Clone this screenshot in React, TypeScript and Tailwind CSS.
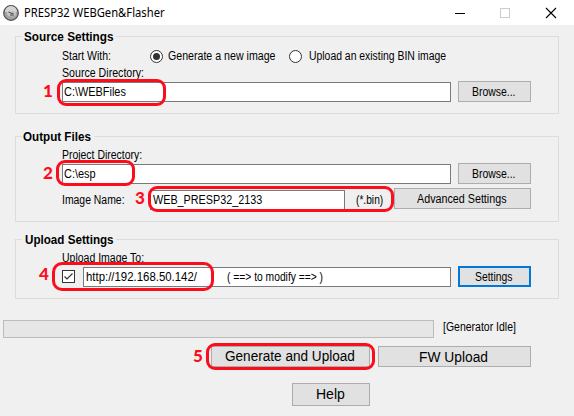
import type { ReactNode } from "react";

const Txt = ({ c = "", children }: { c?: string; children: ReactNode }) => (
  <span className={`inline-block origin-left whitespace-pre ${c}`}>{children}</span>
);

const Btn = ({ c, children }: { c: string; children: ReactNode }) => (
  <button className={`flex shrink-0 items-center bg-[#e1e1e1] ${c}`}>{children}</button>
);

const Group = ({ title, legend, scale, c, children }: { title: string; legend: string; scale: string; c: string; children: ReactNode }) => (
  <section className={`mx-[15px] flex shrink-0 flex-col border border-[#dcdcdc] ${c}`}>
    <h2 className={`-mt-[7px] ml-[6px] h-[14px] shrink-0 bg-[#f0f0f0] font-bold leading-[14px] ${legend}`}>
      <Txt c={scale}>{title}</Txt>
    </h2>
    {children}
  </section>
);

const Mark = ({ box, num, n }: { box: string; num: string; n: number }) => (
  <>
    <div className={`pointer-events-none absolute border-[3px] border-[#fc0d1b] ${box}`} />
    <b className={`absolute font-['Lato',sans-serif] text-[17px] font-black leading-[20px] text-[#fc0d1b] ${num}`}>{n}</b>
  </>
);

export default function App() {
  return (
    <div className="relative flex h-[416px] w-[574px] flex-col overflow-hidden bg-[#f0f0f0] font-['Liberation_Sans',Arial,sans-serif] text-[12px] leading-[14px] text-black">
      <header className="flex h-[25px] shrink-0 items-center bg-white">
        <svg className="ml-[3px] shrink-0" width="16" height="16" viewBox="0 0 16 16">
          <circle cx="8" cy="8" r="7.3" fill="#a2a2a2" stroke="#4c4c4c" strokeWidth="1.2" />
          <path d="M2 7a6 6 0 0 1 12 0" fill="#d4d4d4" />
          <ellipse cx="8.5" cy="8.5" rx="4.5" ry="3" fill="#c8c8c8" />
          <path d="M5.5 7l2.5 1.2 2.5 .2M7 10h4" stroke="#333" strokeWidth=".9" fill="none" />
        </svg>
        <div className="ml-[5px] w-[431px] font-['Noto_Sans',sans-serif]">
          <Txt c="scale-x-[0.935]">PRESP32 WEBGen&amp;Flasher</Txt>
        </div>
        <svg width="104" height="12" viewBox="0 0 104 12" fill="none">
          <path d="M0 6.5h10" stroke="#000" />
          <rect x="45.5" y="1.5" width="9" height="9" stroke="#ccc" />
          <path d="M91 1l10 10M101 1l-10 10" stroke="#000" strokeWidth="1.1" />
        </svg>
      </header>

      <Group title="Source Settings" legend="w-[94px] pl-[2px]" scale="scale-x-[0.98]" c="mt-[11px] h-[78px]">
        <div className="mt-[5px] ml-[46px] flex h-[14px] items-center">
          <div className="w-[88px]"><Txt c="scale-x-[0.875]">Start With:</Txt></div>
          <span className="flex size-[13px] items-center justify-center rounded-full border border-[#333] bg-white">
            <span className="size-[7px] rounded-full bg-[#333]" />
          </span>
          <div className="ml-[5px] w-[121px]"><Txt c="scale-x-[0.885]">Generate a new image</Txt></div>
          <span className="size-[13px] rounded-full border border-[#333] bg-white" />
          <div className="ml-[7px]"><Txt c="scale-x-[0.867]">Upload an existing BIN image</Txt></div>
        </div>
        <div className="mt-[3px] mb-px ml-[46px] h-[14px]"><Txt c="scale-x-[0.885]">Source Directory:</Txt></div>
        <div className="ml-[46px] flex h-[21px] items-end">
          <div className="flex h-[20px] w-[389px] items-center border border-[#7a7a7a] bg-white pl-[1px]">
            <Txt c="scale-x-[0.91]">C:\WEBFiles</Txt>
          </div>
          <Btn c="ml-[7px] h-[21px] w-[73px] border border-[#adadad] pl-[13px]"><Txt c="scale-x-[0.87]">Browse...</Txt></Btn>
        </div>
      </Group>

      <Group title="Output Files" legend="w-[72px] pl-[1px]" scale="scale-x-[0.97]" c="mt-[22px] h-[86px]">
        <div className="mt-[4px] mb-px ml-[46px] h-[14px]"><Txt c="scale-x-[0.87]">Project Directory:</Txt></div>
        <div className="ml-[46px] flex h-[21px] items-end">
          <div className="flex h-[20px] w-[389px] items-center border border-[#7a7a7a] bg-white pl-[1px]">
            <Txt c="scale-x-[0.91]">C:\esp</Txt>
          </div>
          <Btn c="ml-[7px] h-[21px] w-[73px] border border-[#adadad] pl-[13px]"><Txt c="scale-x-[0.87]">Browse...</Txt></Btn>
        </div>
        <div className="mt-[4px] ml-[46px] flex h-[22px] items-start">
          <div className="mt-[5px] w-[88px]"><Txt c="scale-x-[0.868]">Image Name:</Txt></div>
          <div className="mt-[2px] flex h-[20px] w-[195px] items-center border border-[#7a7a7a] bg-white pl-[2px]">
            <Txt c="scale-x-[0.9]">WEB_PRESP32_2133</Txt>
          </div>
          <div className="mt-[5px] ml-[11px] w-[38px]"><Txt c="scale-x-[0.85]">(*.bin)</Txt></div>
          <Btn c="h-[21px] w-[137px] border border-[#adadad] pl-[22px]"><Txt c="scale-x-[0.895]">Advanced Settings</Txt></Btn>
        </div>
      </Group>

      <Group title="Upload Settings" legend="w-[94px] pl-[3px]" scale="scale-x-[0.97]" c="mt-[17px] h-[60px]">
        <div className="mt-[4px] mb-px ml-[46px] h-[14px]"><Txt c="scale-x-[0.875]">Upload Image To:</Txt></div>
        <div className="ml-[46px] flex h-[21px] items-end">
          <svg className="mr-[8px] mb-[4px] shrink-0" width="13" height="13" viewBox="0 0 13 13">
            <rect x=".5" y=".5" width="12" height="12" fill="#fff" stroke="#333" />
            <path d="M2.5 6.5L5 9l5.5-5.5" fill="none" stroke="#333" strokeWidth="1.2" />
          </svg>
          <div className="flex h-[20px] w-[368px] items-center border border-[#7a7a7a] bg-white pl-[2px]">
            <div className="w-[141px]"><Txt c="scale-x-[0.95]">http://192.168.50.142/</Txt></div>
            <Txt c="scale-x-[0.857]">( ==&gt; to modify ==&gt; )</Txt>
          </div>
          <Btn c="ml-[7px] h-[21px] w-[73px] border-2 border-[#0078d7] pl-[15px]"><Txt c="scale-x-[0.865]">Settings</Txt></Btn>
        </div>
      </Group>

      <div className="mt-[21px] ml-[3px] flex h-[18px] shrink-0">
        <div className="h-[18px] w-[431px] border border-[#bcbcbc] bg-[#e6e6e6]" />
        <div className="ml-[9px]"><Txt c="scale-x-[0.875]">[Generator Idle]</Txt></div>
      </div>

      <div className="mt-[8px] ml-[211px] flex shrink-0 gap-[8px] text-[14px]">
        <Btn c="h-[21px] w-[159px] border border-[#adadad] pb-[2px] pl-[13px]"><Txt c="scale-x-[0.97]">Generate and Upload</Txt></Btn>
        <Btn c="h-[21px] w-[153px] border border-[#adadad] pl-[40px]"><Txt c="scale-x-[0.985]">FW Upload</Txt></Btn>
      </div>
      <div className="mt-[16px] ml-[292px] flex shrink-0 text-[14px]">
        <Btn c="h-[23px] w-[78px] border border-[#adadad] pb-[2px] pl-[23px]"><Txt>Help</Txt></Btn>
      </div>

      <Mark n={1} box="left-[57px] top-[79px] h-[27px] w-[109px] rounded-[9px]" num="left-[43px] top-[81px]" />
      <Mark n={2} box="left-[56px] top-[160px] h-[26px] w-[79px] rounded-[9px]" num="left-[43px] top-[163px]" />
      <Mark n={3} box="left-[148px] top-[186px] h-[26px] w-[246px] rounded-[9px]" num="left-[135px] top-[188px]" />
      <Mark n={4} box="left-[52px] top-[262px] h-[29px] w-[162px] rounded-[10px]" num="left-[39px] top-[264px]" />
      <Mark n={5} box="left-[206px] top-[343px] h-[27px] w-[169px] rounded-[9px]" num="left-[193px] top-[346px]" />
    </div>
  );
}
